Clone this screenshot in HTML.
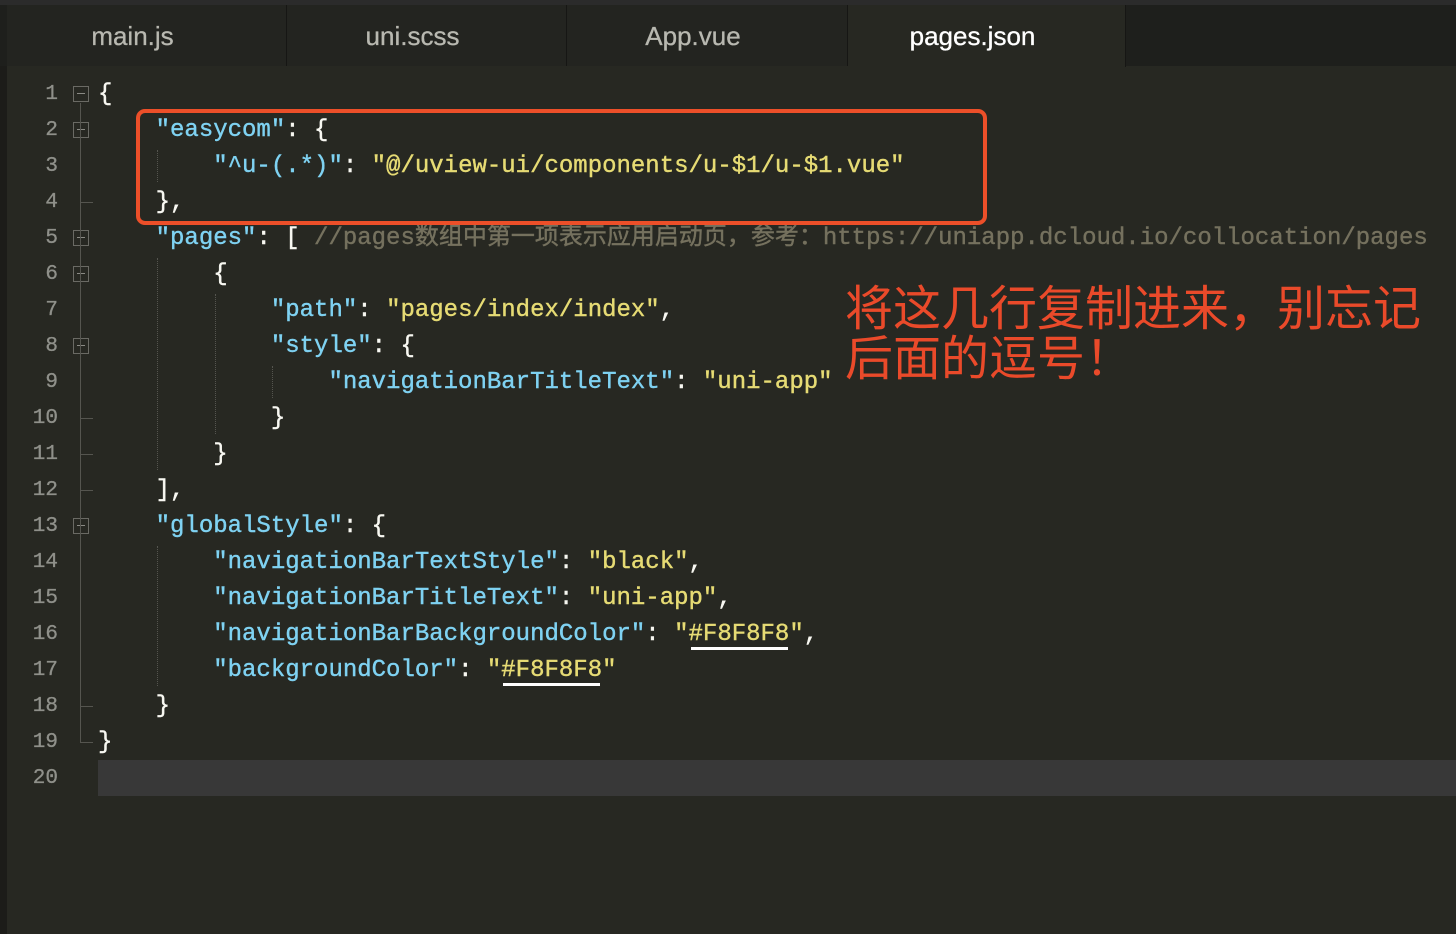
<!DOCTYPE html><html><head><meta charset="utf-8"><style>
body{margin:0;width:1456px;height:934px;background:#272822;position:relative;overflow:hidden;font-family:"Liberation Mono","Noto Sans CJK SC",monospace}
.tabs{position:absolute;left:0;top:0;width:1456px;height:66px;background:#1e1f1c;border-top:5px solid #2b2b2b;box-sizing:border-box}
.tab{position:absolute;top:5px;height:61px;text-align:center;font-family:"Liberation Sans",sans-serif;font-size:26px;line-height:62px;color:#b8b8b0;border-right:1px solid #161614;box-sizing:border-box;padding-right:28px;-webkit-text-stroke:0.3px currentColor}
.lstrip{position:absolute;left:0;top:66px;width:7px;height:868px;background:#1c1c19}
.ln{position:absolute;left:20px;width:38px;text-align:right;font-size:21px;color:#8f908a;height:36px;line-height:38px;-webkit-text-stroke:0.3px currentColor}
.code{position:absolute;left:98px;font-size:24px;white-space:pre;color:#f8f8f2;height:36px;line-height:38px;-webkit-text-stroke:0.4px currentColor}
.k{color:#7fd2f2}.s{color:#e6db74}.c{color:#75715e}
.fold{position:absolute;left:73px;width:14px;height:14px;border:1px solid #6a6a64}
.fold:after{content:"";position:absolute;left:3px;right:3px;top:6px;height:1px;background:#8a8a84}
.vl{position:absolute;left:80px;width:1px;background:#55554f}
.tk{position:absolute;left:80px;width:13px;height:1px;background:#55554f}
.gd{position:absolute;width:0;border-left:1px dotted #55554f}
</style></head><body>
<div class="tabs"></div>
<div class="tab" style="left:7px;width:280px;background:#232420">main.js</div>
<div class="tab" style="left:287px;width:280px;background:#232420">uni.scss</div>
<div class="tab" style="left:567px;width:281px;background:#232420">App.vue</div>
<div class="tab" style="left:848px;width:278px;background:#272822;color:#fff;height:62px">pages.json</div>
<div class="lstrip"></div>
<div style="position:absolute;left:98px;top:760px;width:1358px;height:36px;background:#383838"></div>

<div class="ln" style="top:76px">1</div><div class="ln" style="top:112px">2</div><div class="ln" style="top:148px">3</div><div class="ln" style="top:184px">4</div><div class="ln" style="top:220px">5</div><div class="ln" style="top:256px">6</div><div class="ln" style="top:292px">7</div><div class="ln" style="top:328px">8</div><div class="ln" style="top:364px">9</div><div class="ln" style="top:400px">10</div><div class="ln" style="top:436px">11</div><div class="ln" style="top:472px">12</div><div class="ln" style="top:508px">13</div><div class="ln" style="top:544px">14</div><div class="ln" style="top:580px">15</div><div class="ln" style="top:616px">16</div><div class="ln" style="top:652px">17</div><div class="ln" style="top:688px">18</div><div class="ln" style="top:724px">19</div><div class="ln" style="top:760px">20</div>

<div class="fold" style="top:86px"></div><div class="fold" style="top:122px"></div><div class="fold" style="top:230px"></div><div class="fold" style="top:266px"></div><div class="fold" style="top:338px"></div><div class="fold" style="top:518px"></div>
<div class="vl" style="top:103px;height:639px"></div>
<div class="tk" style="top:202px"></div><div class="tk" style="top:418px"></div><div class="tk" style="top:454px"></div><div class="tk" style="top:490px"></div><div class="tk" style="top:706px"></div><div class="tk" style="top:742px"></div>
<div class="gd" style="left:157px;top:150px;height:32px"></div>
<div class="gd" style="left:157px;top:258px;height:212px"></div>
<div class="gd" style="left:215px;top:294px;height:140px"></div>
<div class="gd" style="left:272px;top:366px;height:32px"></div>
<div class="gd" style="left:157px;top:546px;height:140px"></div>

<div class="code" style="top:76px">{</div>
<div class="code" style="top:112px">    <span class="k">"easycom"</span>: {</div>
<div class="code" style="top:148px">        <span class="k">"^u-(.*)"</span>: <span class="s">"@/uview-ui/components/u-$1/u-$1.vue"</span></div>
<div class="code" style="top:184px">    },</div>
<div class="code" style="top:220px">    <span class="k">"pages"</span>: [ <span class="c">//pages数组中第一项表示应用启动页，参考：https://uniapp.dcloud.io/collocation/pages</span></div>
<div class="code" style="top:256px">        {</div>
<div class="code" style="top:292px">            <span class="k">"path"</span>: <span class="s">"pages/index/index"</span>,</div>
<div class="code" style="top:328px">            <span class="k">"style"</span>: {</div>
<div class="code" style="top:364px">                <span class="k">"navigationBarTitleText"</span>: <span class="s">"uni-app"</span></div>
<div class="code" style="top:400px">            }</div>
<div class="code" style="top:436px">        }</div>
<div class="code" style="top:472px">    ],</div>
<div class="code" style="top:508px">    <span class="k">"globalStyle"</span>: {</div>
<div class="code" style="top:544px">        <span class="k">"navigationBarTextStyle"</span>: <span class="s">"black"</span>,</div>
<div class="code" style="top:580px">        <span class="k">"navigationBarTitleText"</span>: <span class="s">"uni-app"</span>,</div>
<div class="code" style="top:616px">        <span class="k">"navigationBarBackgroundColor"</span>: <span class="s">"#F8F8F8"</span>,</div>
<div class="code" style="top:652px">        <span class="k">"backgroundColor"</span>: <span class="s">"#F8F8F8"</span></div>
<div class="code" style="top:688px">    }</div>
<div class="code" style="top:724px">}</div>

<div style="position:absolute;left:691px;top:647px;width:97px;height:3px;background:#fff"></div>
<div style="position:absolute;left:503px;top:683px;width:97px;height:3px;background:#fff"></div>

<div style="position:absolute;left:836px;top:280px;width:610px;height:100px;background:#272822"></div>
<div style="position:absolute;left:845px;top:279px;font:48px/50px 'Noto Sans CJK SC',sans-serif;color:#ea4a2a;white-space:nowrap">将这几行复制进来，别忘记<br>后面的逗号！</div>

<div style="position:absolute;left:136px;top:109px;width:843px;height:108px;border:4px solid #ec4f29;border-radius:9px"></div>
</body></html>
